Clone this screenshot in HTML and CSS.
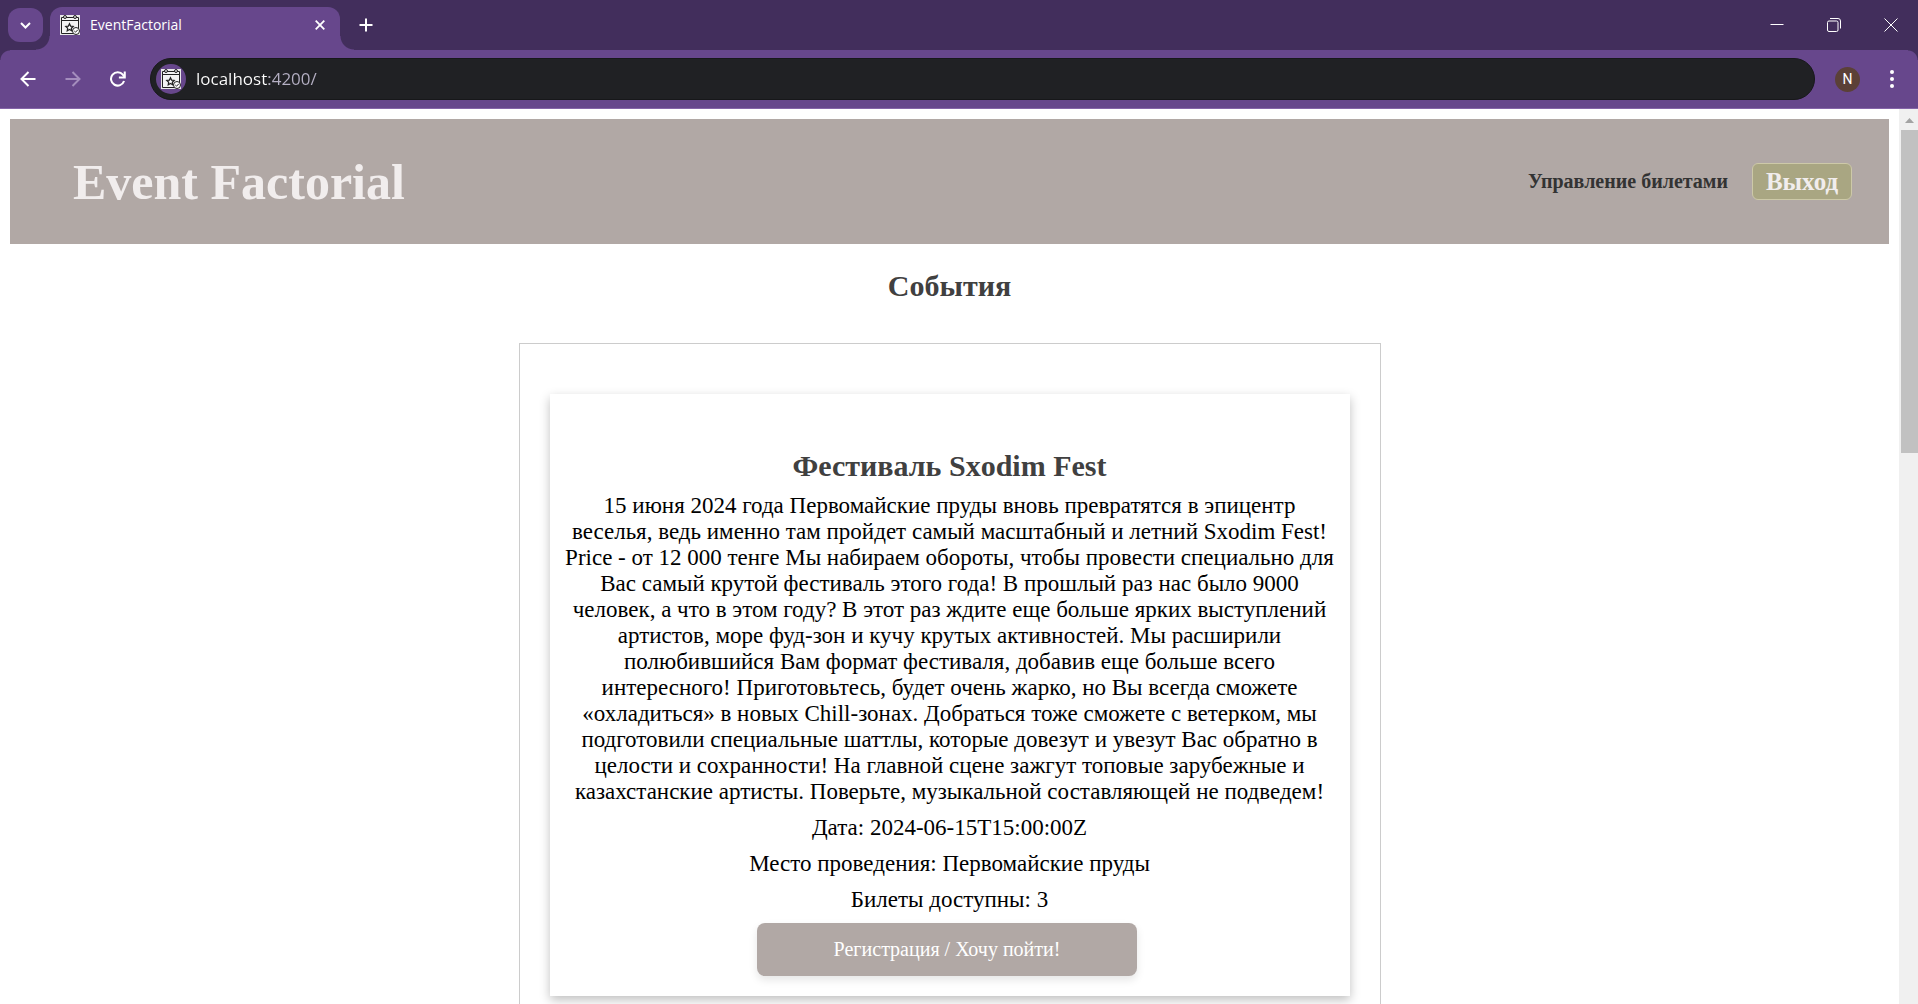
FILE: index.html
```html
<!DOCTYPE html>
<html lang="ru">
<head>
<meta charset="utf-8">
<meta name="viewport" content="width=device-width, initial-scale=1">
<title>EventFactorial</title>
<link rel="stylesheet" href="styles.css">
</head>
<body>
<svg class="defs" aria-hidden="true">
  <symbol id="event-logo" viewBox="0 0 20 20">
    <path d="M0 0h20v20H0z" fill="#e9e9e9"/>
    <path d="M1.5 2.5h17v16h-17z" fill="#f4f4f4" stroke="#222" stroke-width="1"/>
    <path d="M1.5 5.5h17M7 2.500h6" stroke="#222" stroke-width="1"/>
    <circle cx="5" cy="2" r="1.5" fill="#ddd" stroke="#222"/>
    <circle cx="15" cy="2" r="1.5" fill="#ddd" stroke="#222"/>
    <path d="M9.500 8.700l1.100 2.400 2.600.3-1.900 1.800.5 2.600-2.300-1.300-2.300 1.300.5-2.600-1.900-1.800 2.600-.3z" fill="#fff" stroke="#222" stroke-width="1.200"/>
    <circle cx="16" cy="16" r="3.500" fill="#fff" stroke="#222" stroke-width="1"/>
    <path d="M14.300 16l1.200 1.200 2.300-2.400" fill="none" stroke="#222" stroke-width="1"/>
  </symbol>
</svg>

<div class="tab-strip">
  <button class="tab-search" aria-label="Поиск вкладок">
    <svg width="11" height="7" viewBox="0 0 11 7"><path d="M1 1l4.500 4.500L10 1" fill="none" stroke="#fff" stroke-width="2"/></svg>
  </button>
  <div class="tab">
    <svg class="tab-icon" width="20" height="20"><use href="#event-logo"/></svg>
    <span class="tab-title">EventFactorial</span>
    <button class="plain" aria-label="Закрыть вкладку">
      <svg width="10" height="10" viewBox="0 0 10 10"><path d="M.7.7l8.600 8.600M9.300.7L.7 9.300" stroke="#fff" stroke-width="1.800"/></svg>
    </button>
  </div>
  <button class="plain new-tab" aria-label="Новая вкладка">
    <svg width="14" height="14" viewBox="0 0 14 14"><path d="M7 .5v13M.5 7h13" stroke="#fff" stroke-width="2"/></svg>
  </button>
  <div class="window-controls">
    <button class="plain" aria-label="Свернуть"><svg width="14" height="14" viewBox="0 0 14 14"><path d="M.5 6.500h13" stroke="#fff"/></svg></button>
    <button class="plain" aria-label="Развернуть"><svg width="14" height="14" viewBox="0 0 14 14"><rect x=".5" y="3" width="10.500" height="10.500" rx="1.500" fill="none" stroke="#fff"/><path d="M3 .5h8a2.500 2.500 0 0 1 2.500 2.500v7.500" fill="none" stroke="#fff"/></svg></button>
    <button class="plain" aria-label="Закрыть"><svg width="14" height="14" viewBox="0 0 14 14"><path d="M.5.5l13 13M13.500.5l-13 13" stroke="#fff"/></svg></button>
  </div>
</div>

<div class="toolbar">
  <button class="plain" aria-label="Назад"><svg width="16" height="16" viewBox="0 0 16 16"><path d="M15.500 8H2M8.500 1L1.500 8l7 7" fill="none" stroke="#fff" stroke-width="2"/></svg></button>
  <button class="plain" aria-label="Вперёд" disabled><svg width="16" height="16" viewBox="0 0 16 16"><path d="M.5 8H14M7.500 1l7 7-7 7" fill="none" stroke="#a48dbd" stroke-width="2"/></svg></button>
  <button class="plain" aria-label="Обновить"><svg width="16" height="16" viewBox="0 0 18 18"><path d="M15.800 11.200A7.500 7.500 0 1 1 14.500 4.200L16.500 6.500" fill="none" stroke="#fff" stroke-width="2.300"/><path d="M16.600.5v6.700H10" fill="none" stroke="#fff" stroke-width="2.300"/></svg></button>
  <label class="address">
    <span class="address-icon"><svg width="20" height="20"><use href="#event-logo"/></svg></span>
    <input class="address-input" type="text" value="localhost:4200/" aria-label="Адрес">
  </label>
  <button class="avatar" aria-label="Профиль">N</button>
  <button class="plain menu" aria-label="Меню"><svg width="4" height="18" viewBox="0 0 4 18"><g fill="#fff"><circle cx="2" cy="2" r="2"/><circle cx="2" cy="9" r="2"/><circle cx="2" cy="16" r="2"/></g></svg></button>
</div>

<div class="viewport">
  <div class="page">
    <header class="site-header">
      <h1 class="site-title">Event Factorial</h1>
      <nav class="site-nav">
        <a class="nav-link" href="#tickets">Управление билетами</a>
        <button class="logout">Выход</button>
      </nav>
    </header>
    <main>
      <h2 class="heading">События</h2>
      <section class="events">
        <article class="event">
          <h2 class="event-title">Фестиваль Sxodim Fest</h2>
          <p>15 июня 2024 года Первомайские пруды вновь превратятся в эпицентр веселья, ведь именно там пройдет самый масштабный и летний Sxodim Fest! Price - от 12 000 тенге Мы набираем обороты, чтобы провести специально для Вас самый крутой фестиваль этого года! В прошлый раз нас было 9000 человек, а что в этом году? В этот раз ждите еще больше ярких выступлений артистов, море фуд-зон и кучу крутых активностей. Мы расширили полюбившийся Вам формат фестиваля, добавив еще больше всего интересного! Приготовьтесь, будет очень жарко, но Вы всегда сможете «охладиться» в новых Chill-зонах. Добраться тоже сможете с ветерком, мы подготовили специальные шаттлы, которые довезут и увезут Вас обратно в целости и сохранности! На главной сцене зажгут топовые зарубежные и казахстанские артисты. Поверьте, музыкальной составляющей не подведем!</p>
          <p>Дата: 2024-06-15T15:00:00Z</p>
          <p>Место проведения: Первомайские пруды</p>
          <p>Билеты доступны: 3</p>
          <button class="register">Регистрация / Хочу пойти!</button>
        </article>
      </section>
    </main>
  </div>
  <div class="scrollbar" aria-hidden="true">
    <svg class="scroll-arrow" width="9" height="5" viewBox="0 0 9 5"><path d="M0 5l4.500-5L9 5z" fill="#a3a3a3"/></svg>
    <div class="scroll-thumb"></div>
  </div>
</div>
</body>
</html>
```

FILE: styles.css
```css
* {
  box-sizing: border-box;
}

body {
  display: flex;
  flex-direction: column;
  height: 100vh;
  margin: 0;
  overflow: hidden;
  background: #fff;
  font-family: "Liberation Serif", "Times New Roman", serif;
}

h1, h2, p {
  margin: 0;
}

button {
  padding: 0;
  border: 0;
  font-family: inherit;
}

svg {
  display: block;
  flex: none;
}

.defs {
  position: absolute;
  width: 0;
  height: 0;
}

.plain {
  display: flex;
  align-items: center;
  justify-content: center;
  background: none;
}

/* Browser window */
.tab-strip {
  display: flex;
  flex: none;
  align-items: center;
  height: 50px;
  padding-left: 8px;
  background: #422e5c;
  font-family: "Open Sans", "Noto Sans", sans-serif;
}

.tab-search {
  display: flex;
  align-items: center;
  justify-content: center;
  width: 35px;
  height: 34px;
  border-radius: 12px;
  background: #67478c;
}

.tab {
  position: relative;
  display: flex;
  align-items: center;
  align-self: flex-end;
  width: 290px;
  height: 43px;
  margin-left: 7px;
  padding: 0 15px 7px 10px;
  border-radius: 12px 12px 0 0;
  background: #67478c;
  color: #fff;
}

.tab::before,
.tab::after {
  content: "";
  position: absolute;
  bottom: 0;
  width: 14px;
  height: 14px;
}

.tab::before {
  right: 100%;
  background: radial-gradient(circle at 0 0, transparent 13px, #67478c 14px);
}

.tab::after {
  left: 100%;
  background: radial-gradient(circle at 100% 0, transparent 13px, #67478c 14px);
}

.tab-title {
  flex: 1;
  margin-left: 10px;
  font-size: 14px;
  line-height: 20px;
}

.new-tab {
  margin-left: 19px;
}

.window-controls {
  display: flex;
  gap: 43px;
  margin-left: auto;
  padding-right: 20px;
}

.toolbar {
  display: flex;
  flex: none;
  align-items: center;
  gap: 29px;
  height: 59px;
  padding: 0 24px 0 20px;
  border-bottom: 1px solid #8565a8;
  background:
    radial-gradient(circle at 100% 100%, transparent 9px, #422e5c 10px) 0 0 / 10px 10px no-repeat,
    radial-gradient(circle at 0 100%, transparent 9px, #422e5c 10px) 100% 0 / 10px 10px no-repeat,
    #67478c;
  font-family: "Open Sans", "Noto Sans", sans-serif;
}

.address {
  display: flex;
  flex: 1;
  align-items: center;
  height: 42px;
  margin-left: -5px;
  padding-left: 5px;
  border: 1px solid #17181a;
  border-radius: 21px;
  background: #202124;
}

.address-icon {
  display: flex;
  align-items: center;
  justify-content: center;
  width: 30px;
  height: 30px;
  border-radius: 50%;
  background: #67478c;
}

.address-input {
  flex: 1;
  min-width: 0;
  margin-left: 10px;
  padding: 0;
  border: 0;
  outline: 0;
  background: linear-gradient(to right, #fff 73px, #b5b0c4 73px);
  background-clip: text;
  -webkit-background-clip: text;
  color: transparent;
  font: 17px/24px "Open Sans", "Noto Sans", sans-serif;
}

.avatar {
  width: 25px;
  height: 25px;
  margin: 0 1px 0 -9px;
  border-radius: 50%;
  background: #5b4037;
  color: #fff;
  font: 14px/25px Roboto, sans-serif;
}

.viewport {
  display: flex;
  flex: 1;
  min-height: 0;
}

.page {
  flex: 1;
  min-width: 0;
  padding: 10px;
  overflow: hidden;
}

.scrollbar {
  display: flex;
  flex: none;
  flex-direction: column;
  align-items: center;
  width: 19px;
  padding: 9px 0 0 2px;
  background: #f0f0f0;
}

.scroll-thumb {
  width: 100%;
  height: 36.5%;
  margin-top: 7px;
  background: #c1c1c1;
}

/* Event Factorial page */
.site-header {
  display: flex;
  align-items: center;
  justify-content: space-between;
  height: 125px;
  padding: 0 37px 0 63px;
  background: #b1a8a5;
}

.site-title {
  color: #f1eded;
  font-size: 50px;
  line-height: 60px;
}

.site-nav {
  display: flex;
  align-items: center;
  gap: 24px;
}

.nav-link {
  color: #333;
  font-size: 20px;
  font-weight: bold;
  text-decoration: none;
}

.logout {
  width: 100px;
  height: 37px;
  border: 1px solid #cdc9a8;
  border-radius: 6px;
  background: #a9a682;
  color: #f1eded;
  font-size: 25px;
  font-weight: bold;
}

.heading,
.event-title {
  color: #404040;
  font-size: 30px;
  line-height: 34px;
  text-align: center;
}

.heading {
  margin: 25px 0 40px;
}

.events {
  max-width: 862px;
  margin: 0 auto;
  padding: 50px 30px;
  border: 1px solid #ccc;
}

.event {
  display: flex;
  flex-direction: column;
  align-items: center;
  gap: 10px;
  padding: 55px 13px 20px;
  box-shadow: 0 4px 10px rgba(0, 0, 0, 0.25);
  color: #000;
  font-size: 23px;
  line-height: 26px;
  text-align: center;
}

.register {
  width: 380px;
  height: 53px;
  margin-right: 5px;
  border-radius: 8px;
  background: #b1a8a5;
  box-shadow: 0 4px 8px rgba(0, 0, 0, 0.1);
  color: #fff;
  font-size: 20px;
}
```
